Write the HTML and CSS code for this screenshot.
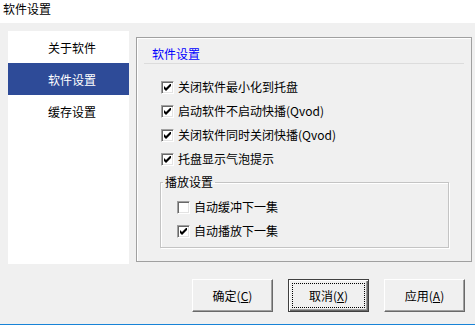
FILE: index.html
```html
<!DOCTYPE html>
<html lang="zh-CN">
<head>
<meta charset="utf-8">
<title>软件设置</title>
<link rel="stylesheet" href="styles.css">
</head>
<body>
<div class="window">
  <div class="titlebar">软件设置</div>
  <div class="main">
    <ul class="nav">
      <li class="nav-item">关于软件</li>
      <li class="nav-item active">软件设置</li>
      <li class="nav-item">缓存设置</li>
    </ul>
    <div class="panel">
      <div class="panel-title">软件设置</div>
      <div class="options">
        <label class="row"><span class="cb checked"><svg viewBox="0 0 7 7" width="7" height="7"><polygon points="0,2 2,4 7,-1 7,2 2,7 0,5" fill="#000"/></svg></span><span class="lbl">关闭软件最小化到托盘</span></label>
        <label class="row"><span class="cb checked"><svg viewBox="0 0 7 7" width="7" height="7"><polygon points="0,2 2,4 7,-1 7,2 2,7 0,5" fill="#000"/></svg></span><span class="lbl">启动软件不启动快播(Qvod)</span></label>
        <label class="row"><span class="cb checked"><svg viewBox="0 0 7 7" width="7" height="7"><polygon points="0,2 2,4 7,-1 7,2 2,7 0,5" fill="#000"/></svg></span><span class="lbl">关闭软件同时关闭快播(Qvod)</span></label>
        <label class="row"><span class="cb checked"><svg viewBox="0 0 7 7" width="7" height="7"><polygon points="0,2 2,4 7,-1 7,2 2,7 0,5" fill="#000"/></svg></span><span class="lbl">托盘显示气泡提示</span></label>
      </div>
      <fieldset class="group">
        <legend class="group-title">播放设置</legend>
        <label class="row"><span class="cb"></span><span class="lbl">自动缓冲下一集</span></label>
        <label class="row"><span class="cb checked"><svg viewBox="0 0 7 7" width="7" height="7"><polygon points="0,2 2,4 7,-1 7,2 2,7 0,5" fill="#000"/></svg></span><span class="lbl">自动播放下一集</span></label>
      </fieldset>
    </div>
  </div>
  <div class="buttons">
    <button class="btn">确定(<u>C</u>)</button>
    <button class="btn default"><span class="focus">取消(<u>X</u>)</span></button>
    <button class="btn">应用(<u>A</u>)</button>
  </div>
  <div class="accent"></div>
</div>
</body>
</html>
```
FILE: styles.css
```css
html, body {
  margin: 0;
  padding: 0;
  width: 475px;
  height: 325px;
  overflow: hidden;
  background: #f0f0f0;
}

.window {
  width: 475px;
  height: 325px;
  display: flex;
  flex-direction: column;
  font-family: "Noto Sans CJK SC", "Microsoft YaHei", sans-serif;
  font-size: 12px;
  color: #000;
}

.titlebar {
  height: 23px;
  line-height: 18px;
  padding-left: 3px;
  background: #fff;
  box-sizing: border-box;
}

.main {
  display: flex;
  gap: 7px;
  padding: 8px 0 0 8px;
}

.nav {
  list-style: none;
  margin: 0;
  padding: 0;
  width: 121px;
  height: 233px;
  background: #fff;
}

.nav-item {
  height: 32px;
  line-height: 30px;
  padding-top: 2px;
  padding-left: 40px;
  box-sizing: border-box;
}

.nav-item.active {
  background: #2e4b98;
  color: #fff;
}

.panel {
  margin-top: 6px;
  width: 336px;
  height: 225px;
  box-sizing: border-box;
  border: 1px solid #a0a0a0;
  box-shadow: inset 1px 1px 0 #fff;
}

.panel-title {
  margin: 0 7px;
  padding: 8px 0 1px 8px;
  line-height: 16px;
  color: #0000ff;
  border-bottom: 1px solid #dcdcdc;
}

.options {
  margin-top: 11px;
  padding-left: 24px;
}

.row {
  display: flex;
  align-items: center;
  height: 24px;
  gap: 4px;
}

.cb {
  width: 13px;
  height: 13px;
  box-sizing: border-box;
  background: #fff;
  border: 1px solid;
  border-color: #a0a0a0 #fff #fff #a0a0a0;
  box-shadow: inset 1px 1px 0 #696969, inset -1px -1px 0 #e3e3e3;
  display: flex;
  align-items: center;
  justify-content: center;
  flex-shrink: 0;
}

.cb svg {
  display: block;
}

.lbl {
  line-height: 16px;
}

.group {
  margin: 4px 0 0 23px;
  width: 289px;
  box-sizing: border-box;
  border: 1px solid #c4c4c4;
  box-shadow: 1px 1px 0 #fff, inset 1px 1px 0 #fff;
  padding: 6px 0 4px 16px;
}

.group-title {
  margin-left: -14px;
  padding: 0 2px;
  line-height: 14px;
}

.buttons {
  display: flex;
  justify-content: flex-end;
  gap: 15px;
  margin-top: 15px;
  padding-right: 10px;
}

.btn {
  width: 81px;
  height: 33px;
  box-sizing: border-box;
  margin: 0;
  padding: 0;
  font: inherit;
  color: #000;
  background: #f0f0f0;
  border: 1px solid;
  border-color: #fff #696969 #696969 #fff;
  box-shadow: inset -1px -1px 0 #a0a0a0;
  display: flex;
  align-items: center;
  justify-content: center;
}

.btn u {
  text-decoration: underline;
}

.btn.default {
  border: 1px solid #404040;
  box-shadow: inset 1px 1px 0 #fff, inset -1px -1px 0 #696969, inset -2px -2px 0 #a0a0a0;
  padding: 3px;
}

.focus {
  flex: 1;
  align-self: stretch;
  border: 1px dotted #000;
  display: flex;
  align-items: center;
  justify-content: center;
}

.accent {
  margin-top: auto;
  height: 1px;
  background: #1883d7;
}
```
